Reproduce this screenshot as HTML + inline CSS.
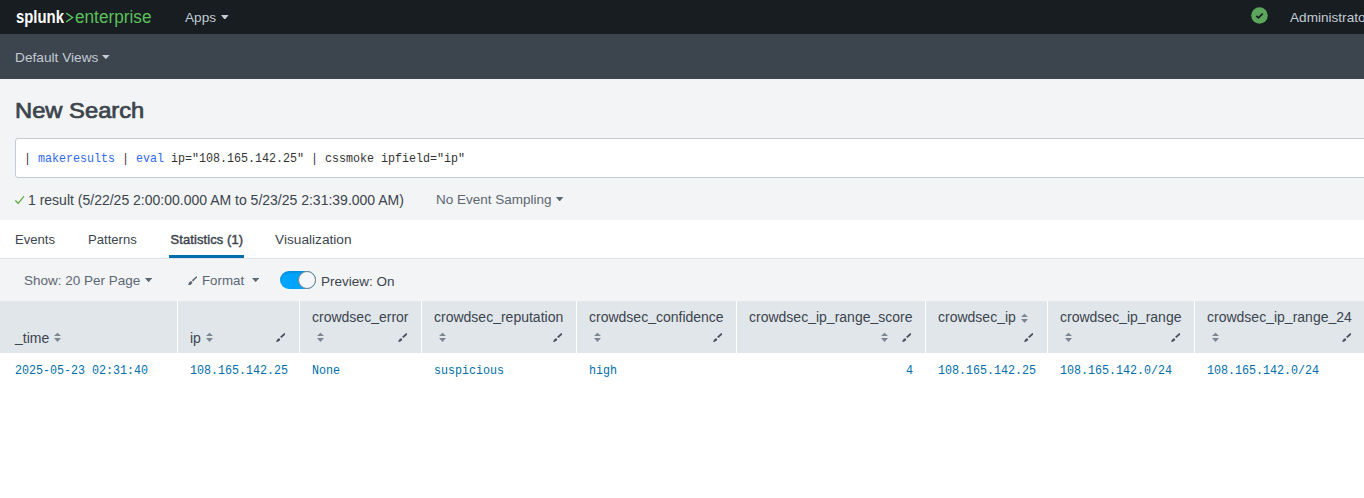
<!DOCTYPE html>
<html><head><meta charset="utf-8">
<style>
*{box-sizing:border-box;margin:0;padding:0}
html,body{width:1364px;height:498px;overflow:hidden;background:#fff;font-family:"Liberation Sans",sans-serif;}
.abs{position:absolute;white-space:nowrap}
#top{position:absolute;left:0;top:0;width:1364px;height:34px;background:#171d21}
#bar2{position:absolute;left:0;top:34px;width:1364px;height:45px;background:#3c444d}
#page{position:absolute;left:0;top:79px;width:1364px;height:141px;background:#f2f4f5}
#tabs{position:absolute;left:0;top:220px;width:1364px;height:39px;background:#fff;border-bottom:1px solid #dde2e6}
#toolbar{position:absolute;left:0;top:259px;width:1364px;height:42px;background:#f2f4f5}
#thead{position:absolute;left:0;top:301px;width:1364px;height:52px;background:#e1e6eb}
.tri{position:absolute;width:0;height:0;border-left:4px solid transparent;border-right:4px solid transparent;border-top:5px solid #c3cbd4}
.mono{font-family:"Liberation Mono",monospace;font-size:13.6px;transform:scaleX(0.858);transform-origin:0 0}
.col{position:absolute;top:301px;height:52px;border-left:1px solid #fff}
.hd{position:absolute;font-size:14px;color:#3c444d;white-space:nowrap}
.cell{position:absolute;top:363px;font-family:"Liberation Mono",monospace;font-size:13.6px;color:#006eaa;white-space:nowrap;transform:scaleX(0.858);transform-origin:0 0}
</style></head><body>
<div id="top">
  <div class="abs" style="left:16px;top:7px;font-size:17.5px;font-weight:bold;color:#fff;transform:scaleX(0.85);transform-origin:0 0">splunk</div>
  <svg class="abs" style="left:64px;top:11px" width="11" height="13" viewBox="0 0 11 13"><path d="M2.2 2.2 L8.6 6.5 L2.2 10.8" stroke="#5cc05c" stroke-width="1.4" fill="none"/></svg>
  <div class="abs" style="left:74.5px;top:7px;font-size:18px;color:#5cc05c;transform:scaleX(0.955);transform-origin:0 0">enterprise</div>
  <div class="abs" style="left:185px;top:10px;font-size:13.6px;color:#c3cbd4">Apps</div>
  <svg class="abs" style="left:221.4px;top:14.7px" width="7.6" height="4.8" viewBox="0 0 7.6 4.8"><path d="M0 0 L7.6 0 L3.8 4.8 Z" fill="#c3cbd4"/></svg>
  <svg class="abs" style="left:1251px;top:7.3px" width="17" height="17" viewBox="0 0 17 17"><circle cx="8.5" cy="8.5" r="8.3" fill="#5ca65c"/><path d="M5.3 8.9 L7.4 10.9 L11.7 6.6" stroke="#171d21" stroke-width="1.7" fill="none"/></svg>
  <div class="abs" style="left:1290px;top:10px;font-size:13.6px;color:#c3cbd4">Administrator</div>
</div>
<div id="bar2">
  <div class="abs" style="left:15px;top:16px;font-size:13.7px;color:#c3cbd4">Default Views</div>
  <svg class="abs" style="left:102.3px;top:21.299999999999997px" width="7.7" height="4.2" viewBox="0 0 7.7 4.2"><path d="M0 0 L7.7 0 L3.85 4.2 Z" fill="#c3cbd4"/></svg>
</div>
<div id="page">
  <div class="abs" style="left:15px;top:20px;font-size:21.4px;color:#3c444d;-webkit-text-stroke:0.7px #3c444d;transform:scaleX(1.11);transform-origin:0 0">New Search</div>
  <div class="abs" style="left:15px;top:59px;width:1360px;height:40px;background:#fff;border:1px solid #c3cbd4;border-radius:3px"></div>
  <div class="abs mono" style="left:24px;top:71.5px;color:#333">| <span style="color:#2f69ee">makeresults</span> | <span style="color:#2f69ee">eval</span> ip="108.165.142.25" | cssmoke ipfield="ip"</div>
  <svg class="abs" style="left:15px;top:116.8px" width="10" height="10" viewBox="0 0 10 10"><path d="M0.3 4.4 L3.2 7.3 L8.9 0.4" stroke="#5ba83a" stroke-width="1.25" fill="none"/></svg>
  <div class="abs" style="left:28px;top:113px;font-size:14px;color:#3c444d">1 result (5/22/25 2:00:00.000 AM to 5/23/25 2:31:39.000 AM)</div>
  <div class="abs" style="left:436px;top:113px;font-size:13.5px;color:#5c6773">No Event Sampling</div>
  <svg class="abs" style="left:556.3px;top:117.9px" width="7.3" height="4.5" viewBox="0 0 7.3 4.5"><path d="M0 0 L7.3 0 L3.65 4.5 Z" fill="#5c6773"/></svg>
</div>
<div id="tabs">
  <div class="abs" style="left:15px;top:12px;font-size:13.1px;color:#3c444d">Events</div>
  <div class="abs" style="left:88px;top:12px;font-size:13.1px;color:#3c444d">Patterns</div>
  <div class="abs" style="left:170.5px;top:12px;font-size:12.9px;color:#3c444d;-webkit-text-stroke:0.45px #3c444d;letter-spacing:0.13px">Statistics (1)</div>
  <div class="abs" style="left:275px;top:12px;font-size:13.7px;color:#3c444d">Visualization</div>
  <div class="abs" style="left:169px;top:35px;width:75px;height:3px;background:#006eaa"></div>
</div>
<div id="toolbar">
  <div class="abs" style="left:24px;top:14px;font-size:13.5px;color:#5c6773">Show: 20 Per Page</div>
  <svg class="abs" style="left:144.8px;top:18.9px" width="7.2" height="4.3" viewBox="0 0 7.2 4.3"><path d="M0 0 L7.2 0 L3.6 4.3 Z" fill="#5c6773"/></svg>
  <svg class="abs" style="left:187.5px;top:16.5px" width="9.4" height="9.4" viewBox="0 0 10 10"><path d="M8.9 0.2 L9.8 1.1 L5.5 5.9 L4.1 4.5 Z" fill="#5c6773"/><path d="M3.3 5.3 L4.7 6.7 C4.4 8.6 2.6 10 0 10 C0.3 7.8 1.5 5.7 3.3 5.3 Z" fill="#5c6773"/></svg>
  <div class="abs" style="left:202px;top:14px;font-size:13.3px;color:#5c6773">Format</div>
  <svg class="abs" style="left:251.9px;top:19px" width="7.3" height="4.2" viewBox="0 0 7.3 4.2"><path d="M0 0 L7.3 0 L3.65 4.2 Z" fill="#5c6773"/></svg>
  <div class="abs" style="left:280px;top:12px;width:36px;height:18px;border-radius:9px;background:#00a4fd;box-shadow:inset 0 2px 2px rgba(0,0,0,0.12)"></div>
  <div class="abs" style="left:298px;top:12px;width:18px;height:18px;border-radius:50%;background:#f5f6f8;border:1px solid #7d838a"></div>
  <div class="abs" style="left:321px;top:14.5px;font-size:13.5px;color:#3c444d">Preview: On</div>
</div>
<div id="thead"></div>
<div style="position:absolute;left:177px;top:301px;width:1px;height:52px;background:#fff"></div>
<div style="position:absolute;left:299px;top:301px;width:1px;height:52px;background:#fff"></div>
<div style="position:absolute;left:421px;top:301px;width:1px;height:52px;background:#fff"></div>
<div style="position:absolute;left:576px;top:301px;width:1px;height:52px;background:#fff"></div>
<div style="position:absolute;left:736px;top:301px;width:1px;height:52px;background:#fff"></div>
<div style="position:absolute;left:925px;top:301px;width:1px;height:52px;background:#fff"></div>
<div style="position:absolute;left:1047px;top:301px;width:1px;height:52px;background:#fff"></div>
<div style="position:absolute;left:1194px;top:301px;width:1px;height:52px;background:#fff"></div>
<div class="hd" style="left:15px;top:330px"><span style="position:relative;top:-1.5px">_</span>time</div>
<svg class="sort" width="8" height="11" viewBox="0 0 8 11" style="position:absolute;left:54px;top:332px"><path d="M0 4 L3.5 0.7 L7 4 Z M0 6 L7 6 L3.5 9.9 Z" fill="#7b8692"/></svg>
<div class="hd" style="left:190px;top:330px">ip</div>
<svg class="sort" width="8" height="11" viewBox="0 0 8 11" style="position:absolute;left:206px;top:332px"><path d="M0 4 L3.5 0.7 L7 4 Z M0 6 L7 6 L3.5 9.9 Z" fill="#7b8692"/></svg>
<svg width="9.6" height="9" viewBox="0 0 10 10" preserveAspectRatio="none" style="position:absolute;left:275.7px;top:332.8px"><path d="M8.7 -0.1 L10.1 1.2 L5.7 5.6 L4.3 4.3 Z" fill="#47505a"/><path d="M3.3 5.8 L4.4 6.9 C4.0 8.9 2.3 9.9 0.2 10 C0.4 8.2 1.4 6.3 3.3 5.8 Z" fill="#47505a"/></svg>
<div class="hd" style="left:312px;top:309px">crowdsec<span style="position:relative;top:-1.5px">_</span>error</div>
<svg class="sort" width="8" height="11" viewBox="0 0 8 11" style="position:absolute;left:317px;top:332px"><path d="M0 4 L3.5 0.7 L7 4 Z M0 6 L7 6 L3.5 9.9 Z" fill="#7b8692"/></svg>
<svg width="9.6" height="9" viewBox="0 0 10 10" preserveAspectRatio="none" style="position:absolute;left:397.7px;top:332.8px"><path d="M8.7 -0.1 L10.1 1.2 L5.7 5.6 L4.3 4.3 Z" fill="#47505a"/><path d="M3.3 5.8 L4.4 6.9 C4.0 8.9 2.3 9.9 0.2 10 C0.4 8.2 1.4 6.3 3.3 5.8 Z" fill="#47505a"/></svg>
<div class="hd" style="left:434px;top:309px">crowdsec<span style="position:relative;top:-1.5px">_</span>reputation</div>
<svg class="sort" width="8" height="11" viewBox="0 0 8 11" style="position:absolute;left:439px;top:332px"><path d="M0 4 L3.5 0.7 L7 4 Z M0 6 L7 6 L3.5 9.9 Z" fill="#7b8692"/></svg>
<svg width="9.6" height="9" viewBox="0 0 10 10" preserveAspectRatio="none" style="position:absolute;left:552.7px;top:332.8px"><path d="M8.7 -0.1 L10.1 1.2 L5.7 5.6 L4.3 4.3 Z" fill="#47505a"/><path d="M3.3 5.8 L4.4 6.9 C4.0 8.9 2.3 9.9 0.2 10 C0.4 8.2 1.4 6.3 3.3 5.8 Z" fill="#47505a"/></svg>
<div class="hd" style="left:589px;top:309px">crowdsec<span style="position:relative;top:-1.5px">_</span>confidence</div>
<svg class="sort" width="8" height="11" viewBox="0 0 8 11" style="position:absolute;left:594px;top:332px"><path d="M0 4 L3.5 0.7 L7 4 Z M0 6 L7 6 L3.5 9.9 Z" fill="#7b8692"/></svg>
<svg width="9.6" height="9" viewBox="0 0 10 10" preserveAspectRatio="none" style="position:absolute;left:712.7px;top:332.8px"><path d="M8.7 -0.1 L10.1 1.2 L5.7 5.6 L4.3 4.3 Z" fill="#47505a"/><path d="M3.3 5.8 L4.4 6.9 C4.0 8.9 2.3 9.9 0.2 10 C0.4 8.2 1.4 6.3 3.3 5.8 Z" fill="#47505a"/></svg>
<div class="hd" style="left:1060px;top:309px">crowdsec<span style="position:relative;top:-1.5px">_</span>ip<span style="position:relative;top:-1.5px">_</span>range</div>
<svg class="sort" width="8" height="11" viewBox="0 0 8 11" style="position:absolute;left:1065px;top:332px"><path d="M0 4 L3.5 0.7 L7 4 Z M0 6 L7 6 L3.5 9.9 Z" fill="#7b8692"/></svg>
<svg width="9.6" height="9" viewBox="0 0 10 10" preserveAspectRatio="none" style="position:absolute;left:1170.7px;top:332.8px"><path d="M8.7 -0.1 L10.1 1.2 L5.7 5.6 L4.3 4.3 Z" fill="#47505a"/><path d="M3.3 5.8 L4.4 6.9 C4.0 8.9 2.3 9.9 0.2 10 C0.4 8.2 1.4 6.3 3.3 5.8 Z" fill="#47505a"/></svg>
<div class="hd" style="left:1207px;top:309px">crowdsec<span style="position:relative;top:-1.5px">_</span>ip<span style="position:relative;top:-1.5px">_</span>range<span style="position:relative;top:-1.5px">_</span>24</div>
<svg class="sort" width="8" height="11" viewBox="0 0 8 11" style="position:absolute;left:1212px;top:332px"><path d="M0 4 L3.5 0.7 L7 4 Z M0 6 L7 6 L3.5 9.9 Z" fill="#7b8692"/></svg>
<svg width="9.6" height="9" viewBox="0 0 10 10" preserveAspectRatio="none" style="position:absolute;left:1341.7px;top:332.8px"><path d="M8.7 -0.1 L10.1 1.2 L5.7 5.6 L4.3 4.3 Z" fill="#47505a"/><path d="M3.3 5.8 L4.4 6.9 C4.0 8.9 2.3 9.9 0.2 10 C0.4 8.2 1.4 6.3 3.3 5.8 Z" fill="#47505a"/></svg>
<div class="hd" style="left:749px;top:309px">crowdsec<span style="position:relative;top:-1.5px">_</span>ip<span style="position:relative;top:-1.5px">_</span>range<span style="position:relative;top:-1.5px">_</span>score</div>
<svg class="sort" width="8" height="11" viewBox="0 0 8 11" style="position:absolute;left:880.6px;top:332px"><path d="M0 4 L3.5 0.7 L7 4 Z M0 6 L7 6 L3.5 9.9 Z" fill="#7b8692"/></svg>
<svg width="9.6" height="9" viewBox="0 0 10 10" preserveAspectRatio="none" style="position:absolute;left:901.7px;top:332.8px"><path d="M8.7 -0.1 L10.1 1.2 L5.7 5.6 L4.3 4.3 Z" fill="#47505a"/><path d="M3.3 5.8 L4.4 6.9 C4.0 8.9 2.3 9.9 0.2 10 C0.4 8.2 1.4 6.3 3.3 5.8 Z" fill="#47505a"/></svg>
<div class="hd" style="left:938px;top:309px">crowdsec<span style="position:relative;top:-1.5px">_</span>ip</div>
<svg class="sort" width="8" height="11" viewBox="0 0 8 11" style="position:absolute;left:1021px;top:313px"><path d="M0 4 L3.5 0.7 L7 4 Z M0 6 L7 6 L3.5 9.9 Z" fill="#7b8692"/></svg>
<svg width="9.6" height="9" viewBox="0 0 10 10" preserveAspectRatio="none" style="position:absolute;left:1023.7px;top:332.8px"><path d="M8.7 -0.1 L10.1 1.2 L5.7 5.6 L4.3 4.3 Z" fill="#47505a"/><path d="M3.3 5.8 L4.4 6.9 C4.0 8.9 2.3 9.9 0.2 10 C0.4 8.2 1.4 6.3 3.3 5.8 Z" fill="#47505a"/></svg>
<div class="cell" style="left:14.5px">2025-05-23 02:31:40</div>
<div class="cell" style="left:189.5px">108.165.142.25</div>
<div class="cell" style="left:311.5px">None</div>
<div class="cell" style="left:433.5px">suspicious</div>
<div class="cell" style="left:588.5px">high</div>
<div class="cell" style="left:937.5px">108.165.142.25</div>
<div class="cell" style="left:1059.5px">108.165.142.0/24</div>
<div class="cell" style="left:1206.5px">108.165.142.0/24</div>
<div class="cell" style="left:905.5px">4</div>
</body></html>
